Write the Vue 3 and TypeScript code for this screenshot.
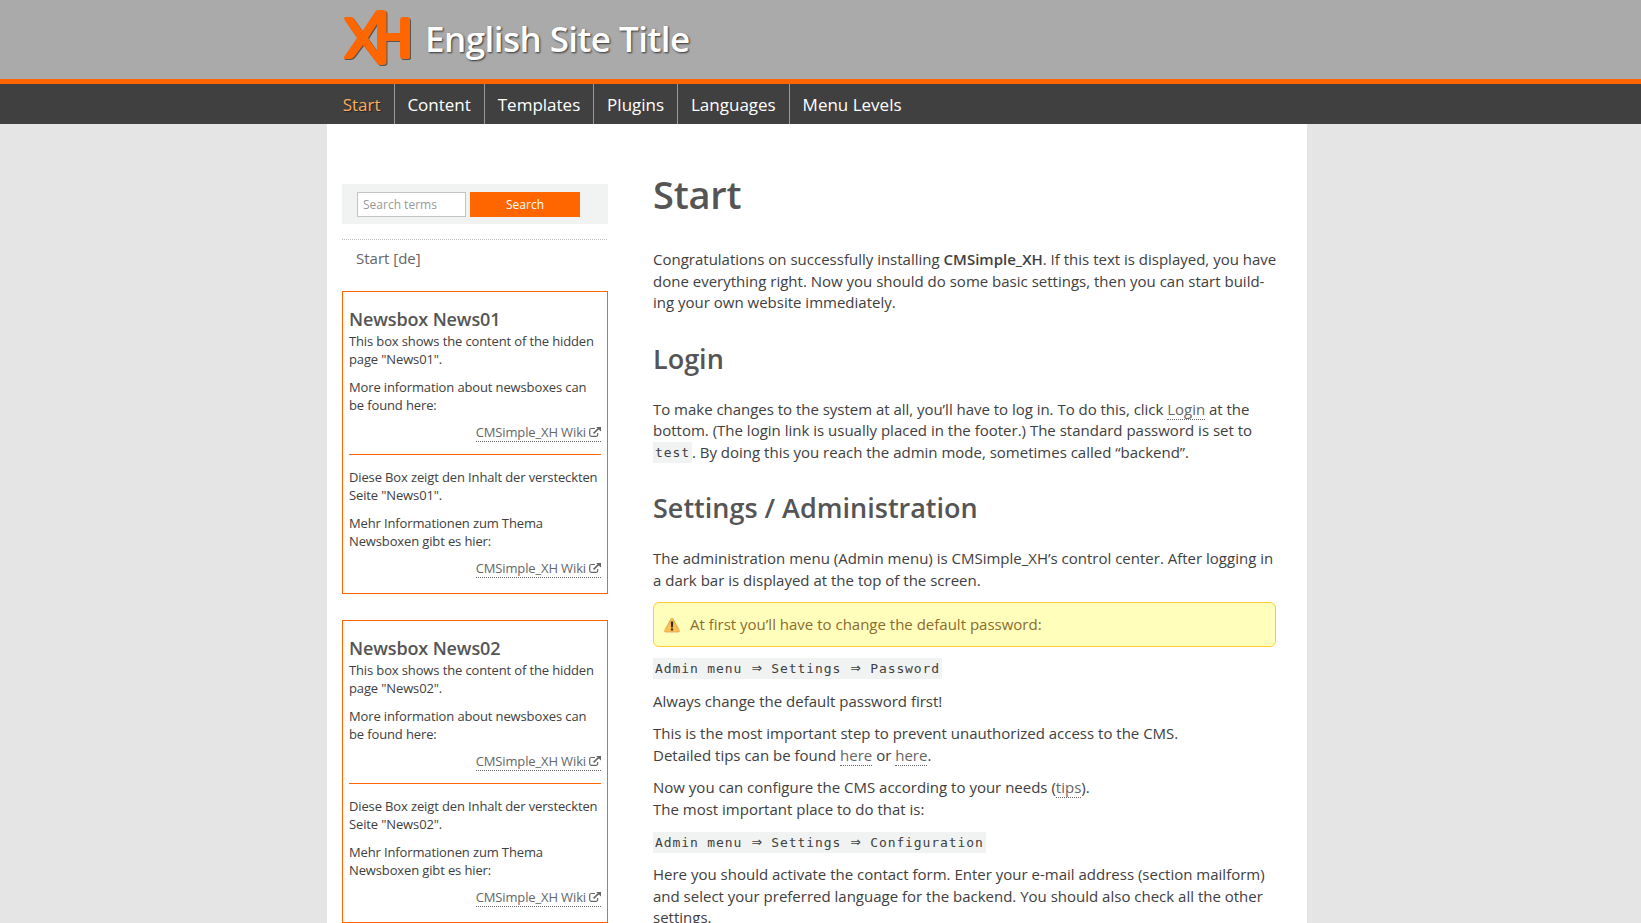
<script setup lang="ts">
const nav: string[] = ['Start', 'Content', 'Templates', 'Plugins', 'Languages', 'Menu Levels']
const boxes: string[] = ['News01', 'News02']
</script>

<template>
  <div class="site">
    <header class="top">
      <div class="wrap brand">
        <svg class="logo" width="70" height="60" viewBox="0 0 70 60">
          <path
            class="mark"
            fill-rule="evenodd"
            d="M1 9Q1 7 3 7H8Q10 7 11 9L19.5 21L32 2Q33 0 35 0H40Q43.5 0 43.5 3V23H57V10Q57 7 60 7H64Q67 7 67 10V47Q67 49 64 49H60Q57 49 57 46V31H43.5V52Q43.5 55 40 55H37Q35 55 34 53L20 35L11 47Q9 49 7 49H2Q0 49 1 47L14 28ZM34 14L25 28L34 41Z"
          />
        </svg>
        <div class="title">English Site Title</div>
      </div>
    </header>
    <nav class="bar">
      <ul class="wrap menu">
        <li v-for="(item, i) in nav" :key="item" :class="{ current: i === 0 }"><span>{{ item }}</span></li>
      </ul>
    </nav>
    <div class="page">
      <aside class="side">
        <form class="search" @submit.prevent>
          <input type="text" placeholder="Search terms" />
          <button type="submit">Search</button>
        </form>
        <div class="lang">Start [de]</div>
        <section v-for="name in boxes" :key="name" class="news">
          <h3>Newsbox {{ name }}</h3>
          <p>This box shows the content of the hidden<br />page "{{ name }}".</p>
          <p>More information about newsboxes can<br />be found here:</p>
          <p class="more">
            <a>CMSimple_XH Wiki<svg class="ext" width="12" height="10" viewBox="0 0 12 10"><path d="M6 1.5H2.3Q.7 1.5 .7 3V7.8Q.7 9.3 2.3 9.3H7.2Q8.7 9.3 8.7 7.8V6" /><path d="M4.5 6.3L9.5 1.6" class="thick" /><path d="M7.2 0H12V4.6Z" class="head" /></svg></a>
          </p>
          <hr />
          <p>Diese Box zeigt den Inhalt der versteckten<br />Seite "{{ name }}".</p>
          <p>Mehr Informationen zum Thema<br />Newsboxen gibt es hier:</p>
          <p class="more">
            <a>CMSimple_XH Wiki<svg class="ext" width="12" height="10" viewBox="0 0 12 10"><path d="M6 1.5H2.3Q.7 1.5 .7 3V7.8Q.7 9.3 2.3 9.3H7.2Q8.7 9.3 8.7 7.8V6" /><path d="M4.5 6.3L9.5 1.6" class="thick" /><path d="M7.2 0H12V4.6Z" class="head" /></svg></a>
          </p>
        </section>
      </aside>
      <main class="content">
        <h1>Start</h1>
        <p>Congratulations on successfully installing <b>CMSimple_XH</b>. If this text is displayed, you have<br />done everything right. Now you should do some basic settings, then you can start build-<br />ing your own website immediately.</p>
        <h2>Login</h2>
        <p><span class="tight">To make changes to the system at all, you’ll have to log in. To do this, click <a>Login</a> at the</span><br />bottom. (The login link is usually placed in the footer.) The standard password is set to<br /><code>test</code>. By doing this you reach the admin mode, sometimes called “backend”.</p>
        <h2>Settings / Administration</h2>
        <p>The administration menu (Admin menu) is CMSimple_XH’s control center. After logging in<br />a dark bar is displayed at the top of the screen.</p>
        <div class="warning">
          <svg width="16" height="16" viewBox="0 0 16 16">
            <path d="M8 1.2Q8.8 1.2 9.2 2L15.3 13.4Q15.9 15 14.4 15H1.6Q.1 15 .7 13.4L6.8 2Q7.2 1.2 8 1.2Z" fill="#fdc04c" stroke="#d9a05b" stroke-width=".8" />
            <path d="M6.8 4.6H9.2L8.9 10.4H7.1ZM6.9 11.4H9.1V13.5H6.9Z" fill="#2d2d2d" />
          </svg>
          <span>At first you’ll have to change the default password:</span>
        </div>
        <p><code>Admin menu <i>⇒</i> Settings <i>⇒</i> Password</code></p>
        <p>Always change the default password first!</p>
        <p>This is the most important step to prevent unauthorized access to the CMS.<br />Detailed tips can be found <a>here</a> or <a>here</a>.</p>
        <p>Now you can configure the CMS according to your needs (<a>tips</a>).<br />The most important place to do that is:</p>
        <p><code>Admin menu <i>⇒</i> Settings <i>⇒</i> Configuration</code></p>
        <p>Here you should activate the contact form. Enter your e-mail address (section mailform)<br />and select your preferred language for the backend. You should also check all the other<br />settings.</p>
      </main>
    </div>
  </div>
</template>

<style>
body {
  background: #e5e5e5;
  overflow: hidden;
}
</style>

<style scoped>
.site {
  box-sizing: border-box;
  height: 923px;
  overflow: hidden;
  display: flex;
  flex-direction: column;
  background: #e5e5e5;
  color: #404040;
  font-family: "Open Sans", "Noto Sans", sans-serif;
  font-size: 15px;
  white-space: nowrap;
}
.wrap {
  box-sizing: border-box;
  width: 980px;
  margin: 0 0 0 327px;
}
.top {
  flex: none;
  height: 79px;
  background: #aaa;
  border-bottom: 5px solid #f60;
}
.brand {
  display: flex;
  padding: 10px 0 0 15.5px;
}
.logo {
  filter: drop-shadow(1px 1px 0.5px #555);
}
.mark {
  fill: #f60;
}
.title {
  margin: 3px 0 0 12.5px;
  font-size: 35px;
  line-height: 52px;
  font-weight: 600;
  letter-spacing: -0.55px;
  color: #fff;
  text-shadow: 1px 1px 2px #333;
}
.bar {
  flex: none;
  height: 40px;
  background: #404040;
}
.menu {
  display: flex;
  padding: 0 0 0 3px;
  list-style: none;
}
.menu li {
  height: 40px;
  padding: 0 13.2px 0 12.7px;
  border-right: 1px solid #999;
  color: #fff;
  font-size: 17px;
  line-height: 42px;
}
.menu li:last-child {
  border: 0;
}
.menu .current {
  color: #fdae5b;
  text-shadow: 1px 1px 1px #222;
}
.page {
  flex: 1;
  min-height: 0;
  box-sizing: border-box;
  width: 980px;
  margin-left: 327px;
  padding-left: 15px;
  display: flex;
  gap: 45px;
  background: #fff;
}
.side {
  width: 266px;
  padding-top: 60px;
}
.search {
  display: flex;
  box-sizing: border-box;
  height: 40px;
  gap: 4px;
  padding: 8px 0 0 15px;
  margin-bottom: 15px;
  background: #f1f3f2;
}
.search input,
.search button {
  box-sizing: border-box;
  height: 25px;
  margin: 0;
  font: 12px "Open Sans", sans-serif;
}
.search input {
  width: 109px;
  padding: 0 5px;
  border: 1px solid #c4c4c4;
  background: #fff;
}
.search input::placeholder {
  color: #999;
}
.search button {
  width: 110px;
  border: 0;
  padding: 0;
  background: #f60;
  color: #fff;
}
.lang {
  width: 251px;
  height: 43px;
  padding: 8px 0 0 14px;
  border-top: 1px dotted #bbb;
  line-height: 20px;
  color: #666;
}
.news {
  box-sizing: border-box;
  height: 303px;
  padding: 16px 6px 0;
  margin-bottom: 25.7px;
  border: 1px solid #f60;
  font-size: 13px;
  line-height: 18px;
  letter-spacing: -0.13px;
}
.news h3 {
  margin: 0 0 1px;
  font-size: 18px;
  line-height: 23px;
  font-weight: 600;
  color: #555;
}
.news p {
  margin: 0 0 10px;
}
.news .more {
  text-align: right;
  margin: -1px 0 0;
}
a {
  color: #666;
  border-bottom: 1px dotted #666;
}
.ext {
  margin-left: 3px;
  fill: none;
  stroke: #666;
  stroke-width: 1.2;
}
.ext .thick {
  stroke-width: 1.6;
}
.ext .head {
  fill: #666;
  stroke: none;
}
.news hr {
  height: 1px;
  margin: 13px 0;
  border: 0;
  background: #f60;
}
.content {
  width: 623px;
  padding-top: 47px;
  line-height: 21.6px;
}
h1,
h2 {
  color: #555;
  font-weight: 600;
}
h1 {
  margin: 0 0 32px;
  font-size: 38px;
  letter-spacing: -0.2px;
  line-height: 46px;
}
h2 {
  margin: 28px 0 22.8px;
  font-size: 27px;
  line-height: 34px;
}
.content p {
  margin: 0 0 11px;
}
.tight {
  letter-spacing: -0.025px;
}
b {
  font-weight: 600;
}
code {
  display: inline-block;
  box-sizing: border-box;
  height: 21px;
  line-height: 20px;
  padding: 1px 2px 0;
  vertical-align: top;
  background: #f1f3f2;
  font-family: "DejaVu Sans Mono", monospace;
  font-size: 13px;
  letter-spacing: 0.9px;
}
code i {
  display: inline-block;
  width: 11.6px;
  font-style: normal;
  font-size: 17px;
  line-height: 16px;
  letter-spacing: 0;
  text-align: center;
}
.warning {
  display: flex;
  align-items: center;
  box-sizing: border-box;
  height: 45px;
  gap: 10px;
  padding: 1px 10px 0;
  margin: -0.5px 0 11.2px;
  border: 1px solid #fc3;
  border-radius: 6px;
  background: #ffb;
  color: #8b6b2e;
}
</style>
